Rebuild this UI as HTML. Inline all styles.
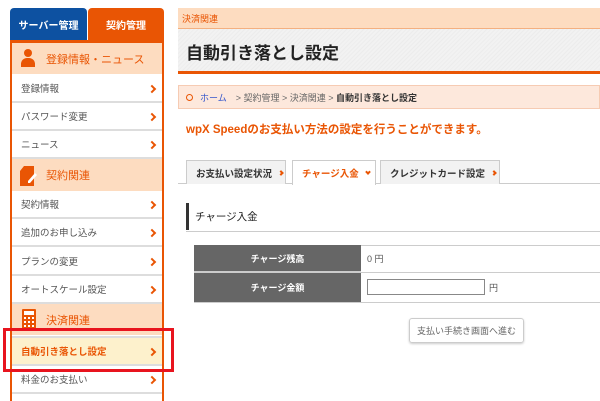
<!DOCTYPE html>
<html><head><meta charset="utf-8"><style>
*{margin:0;padding:0;box-sizing:border-box}
body{width:600px;height:401px;overflow:hidden;background:#fff;font-family:"Liberation Sans","Noto Sans CJK JP",sans-serif;position:relative;color:#333}
.a{position:absolute}
.side{left:10px;top:40px;width:154px;height:361px;border-left:2px solid #e95504;border-right:2px solid #e95504;border-top:3px solid #e95504;background:#fff}
.hd{position:absolute;left:0;width:150px;background:#fddcc0;color:#e95504;font-size:11px;display:flex;align-items:center;padding-left:34px}
.it{position:absolute;left:0;width:150px;height:28px;border-bottom:2px solid #ddd;font-size:9.5px;color:#555;display:flex;align-items:center;padding-left:9px}
.it::after{content:"";position:absolute;right:7px;top:11px;width:4px;height:4px;border-right:2px solid #e95504;border-top:2px solid #e95504;transform:rotate(45deg)}
.tab{position:absolute;top:160px;height:24px;border:1px solid #ccc;border-bottom:none;background:#f2f2f2;font-size:9.5px;font-weight:bold;color:#333;display:flex;align-items:center;padding-left:9px}
.or{color:#e95504}
.chev{display:inline-block;width:4px;height:4px;border-right:2px solid #e95504;border-top:2px solid #e95504;transform:rotate(45deg);margin-left:7px}
</style></head><body>
<div class="a" style="left:10px;top:8px;width:77px;height:33px;background:#0d51a1;border-radius:4px 4px 0 0;color:#fff;font-size:10px;font-weight:bold;display:flex;align-items:center;justify-content:center">サーバー管理</div>
<div class="a" style="left:88px;top:8px;width:76px;height:33px;background:#e95504;border-radius:4px 4px 0 0;color:#fff;font-size:10px;font-weight:bold;display:flex;align-items:center;justify-content:center">契約管理</div>
<div class="a side">
<div class="hd" style="top:0;height:31px">登録情報・ニュース</div>
<div class="a" style="left:12px;top:6px;width:8px;height:8px;border-radius:50%;background:#e95504"></div>
<div class="a" style="left:9px;top:15px;width:14px;height:9px;border-radius:6px 6px 0 0;background:#e95504"></div>
<div class="it" style="top:32px">登録情報</div>
<div class="it" style="top:60px">パスワード変更</div>
<div class="it" style="top:88px">ニュース</div>
<div class="hd" style="top:116px;height:32px">契約関連</div>
<svg class="a" style="left:8px;top:123px" width="18" height="20" viewBox="0 0 18 20"><path d="M4 0h10v20H0V5z" fill="#e95504"/><path d="M8 15l7-8 2 2-7 8H8z" fill="#fff"/></svg>
<div class="it" style="top:148px">契約情報</div>
<div class="it" style="top:176px">追加のお申し込み</div>
<div class="it" style="top:205px">プランの変更</div>
<div class="it" style="top:233px">オートスケール設定</div>
<div class="hd" style="top:261px;height:31px">決済関連</div>
<svg class="a" style="left:10px;top:266px" width="14" height="20" viewBox="0 0 14 20"><rect width="14" height="20" rx="1" fill="#e95504"/><rect x="2" y="2" width="10" height="4" fill="#fff"/><g fill="#fff"><rect x="2" y="8" width="2" height="2"/><rect x="6" y="8" width="2" height="2"/><rect x="10" y="8" width="2" height="2"/><rect x="2" y="12" width="2" height="2"/><rect x="6" y="12" width="2" height="2"/><rect x="10" y="12" width="2" height="2"/><rect x="2" y="16" width="2" height="2"/><rect x="6" y="16" width="2" height="2"/><rect x="10" y="16" width="2" height="2"/></g></svg>
<div class="it" style="top:293px;background:#fdf1cc;color:#e95504;font-weight:bold;border-top:2px solid #ddd;height:30px">自動引き落とし設定</div>
<div class="it" style="top:323px">料金のお支払い</div>
</div>
<div class="a" style="left:3px;top:328px;width:171px;height:44px;border:3px solid #e8141e"></div>

<div class="a" style="left:178px;top:8px;width:422px;height:21px;background:#fddcc0;border-bottom:1px solid #f4b080;color:#e95504;font-size:9px;padding:4px 4px">決済関連</div>
<div class="a" style="left:178px;top:29px;width:422px;height:42px;background:repeating-linear-gradient(135deg,#f2f2f2 0 2px,#ececec 2px 3px);font-size:17px;font-weight:bold;color:#222;padding:10px 8px">自動引き落とし設定</div>
<div class="a" style="left:178px;top:71px;width:422px;height:3px;background:#e95504"></div>
<div class="a" style="left:178px;top:85px;width:422px;height:24px;background:#fde8dc;border:1px solid #f6cbb3;font-size:9px;display:flex;align-items:center;padding-left:7px;color:#666"><span style="display:inline-block;width:7px;height:7px;border:1.5px solid #e95504;border-radius:50%;margin-right:7px"></span><span style="color:#3355cc;margin-right:9px">ホーム</span>&gt; 契約管理 &gt; 決済関連 &gt;&nbsp;<b style="color:#333">自動引き落とし設定</b></div>
<div class="a" style="left:186px;top:121px;font-size:11.5px;font-weight:bold;color:#e95504">wpX Speedのお支払い方法の設定を行うことができます。</div>
<div class="a" style="left:178px;top:183px;width:422px;height:1px;background:#ccc"></div>
<div class="tab" style="left:186px;width:100px">お支払い設定状況<span class="chev"></span></div>
<div class="tab or" style="left:292px;width:84px;background:#fff;height:25px">チャージ入金<span class="chev" style="transform:rotate(135deg);margin-top:-3px"></span></div>
<div class="tab" style="left:380px;width:120px">クレジットカード設定<span class="chev"></span></div>
<div class="a" style="left:186px;top:203px;width:3px;height:27px;background:#333"></div>
<div class="a" style="left:195px;top:209px;font-size:10.5px;color:#222">チャージ入金</div>
<div class="a" style="left:186px;top:231px;width:414px;height:1px;background:#ccc"></div>
<div class="a" style="left:194px;top:245px;width:406px;height:58px;border-top:1px solid #ccc;border-bottom:1px solid #ccc"></div>
<div class="a" style="left:194px;top:272px;width:406px;height:1px;background:#ccc"></div>
<div class="a" style="left:194px;top:245px;width:167px;height:27px;background:#666;color:#fff;font-size:9px;font-weight:bold;display:flex;align-items:center;justify-content:center;border-bottom:1px solid #ccc">チャージ残高</div>
<div class="a" style="left:194px;top:273px;width:167px;height:29px;background:#666;color:#fff;font-size:9px;font-weight:bold;display:flex;align-items:center;justify-content:center">チャージ金額</div>
<div class="a" style="left:367px;top:252px;font-size:9px;color:#555">0 円</div>
<div class="a" style="left:367px;top:279px;width:118px;height:16px;border:1px solid #888;background:#fff"></div>
<div class="a" style="left:489px;top:281px;font-size:9px;color:#555">円</div>
<div class="a" style="left:409px;top:318px;width:115px;height:25px;border:1px solid #ccc;border-radius:3px;box-shadow:0 1px 2px #ccc;font-size:9px;color:#666;display:flex;align-items:center;justify-content:center">支払い手続き画面へ進む</div>
</body></html>
